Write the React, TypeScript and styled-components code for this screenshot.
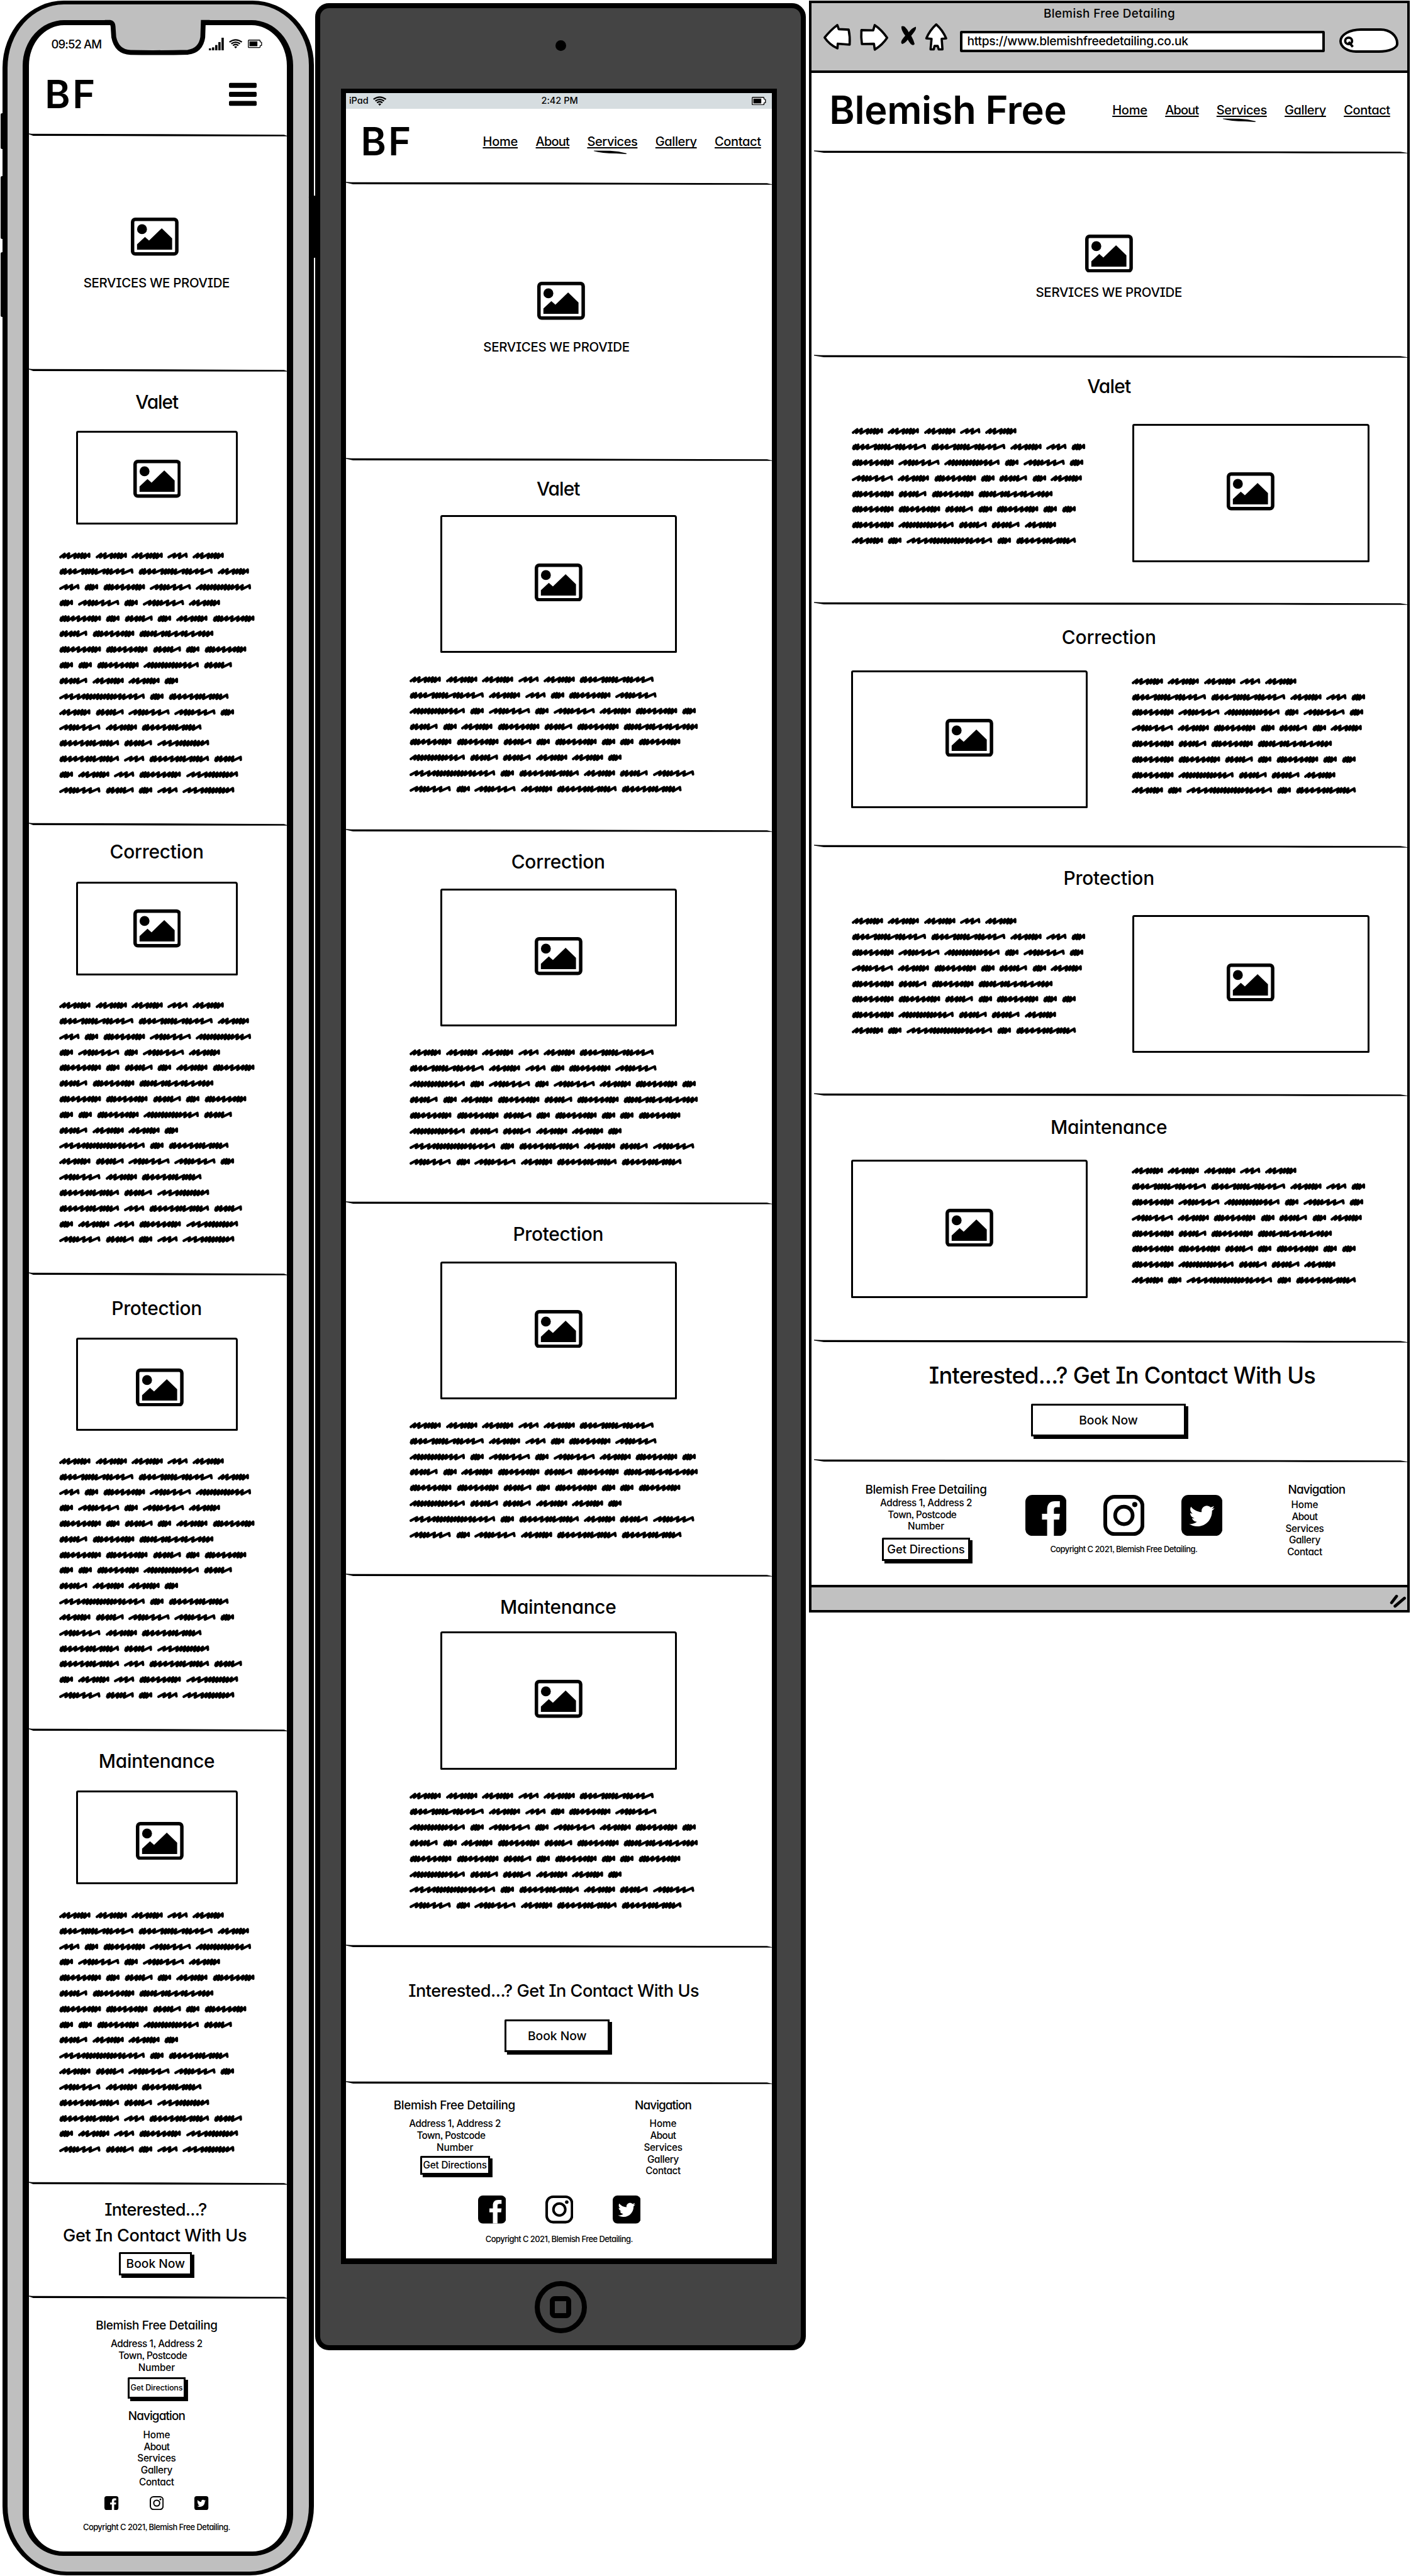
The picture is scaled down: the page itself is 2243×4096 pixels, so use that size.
import React, { useLayoutEffect, useRef, useState } from 'react';
import styled, { createGlobalStyle, css } from 'styled-components';
import { FaTwitter } from 'react-icons/fa';

const SCALE = 0.7859;
const u = (n: number) => `${(n * SCALE).toFixed(3)}px`;
/* Border widths land on whole pixels. */
const b = (n: number) => `${Math.round(n * SCALE)}px`;
const INK = '#000';
const CHROME = '#c1c1c1';

const GlobalStyle = createGlobalStyle`
  * { box-sizing: border-box; }
  html, body { margin: 0; padding: 0; background: #fff; }
  body {
    font-family: Inter, "Open Sans", sans-serif;
    font-weight: 500;
    font-feature-settings: "cv11", "cv08", "ss03";
    color: ${INK};
    overflow: hidden;
  }
  svg { display: block; flex: none; }
`;

/* ---------- text ---------- */

interface LabelProps {
  size: number;
  width: number;
  line?: number;
  top?: number;
  shift?: number;
  underline?: boolean;
  weight?: number;
  children: string;
}

const LabelBox = styled.div<{ $size: number; $line: number; $top: number; $shift: number; $underline?: boolean; $weight?: number }>`
  flex: none;
  white-space: nowrap;
  font-size: ${(p) => u(p.$size)};
  font-weight: ${(p) => p.$weight ?? 500};
  line-height: ${(p) => u(p.$line)};
  height: ${(p) => u(p.$line)};
  margin-top: ${(p) => u(p.$top)};
  ${(p) => p.$shift > 0 && css`margin-left: ${u(p.$shift * 2)};`}
  ${(p) => p.$shift < 0 && css`margin-right: ${u(-p.$shift * 2)};`}
  ${(p) =>
    p.$underline &&
    css`
      text-decoration: underline;
      text-decoration-thickness: ${u(2.8)};
      text-underline-offset: ${u(2.2)};
      text-decoration-skip-ink: none;
    `}
`;

/* Tracks the text so that it fills a given measure. */
function Label({ size, width, line = 24, top = 0, shift = 0, underline, weight, children }: LabelProps) {
  const ref = useRef<HTMLSpanElement>(null);
  const [tracking, setTracking] = useState(0);
  useLayoutEffect(() => {
    if (!ref.current) return;
    const natural = ref.current.getBoundingClientRect().width;
    setTracking((width * SCALE - natural) / (children.length - 0.5));
  }, [children, width]);
  return (
    <LabelBox $size={size} $line={line} $top={top} $shift={shift} $underline={underline} $weight={weight}>
      <span ref={ref} style={{ letterSpacing: tracking }}>{children}</span>
    </LabelBox>
  );
}

/* ---------- sketched glyph words ---------- */

const WORDS: Record<string, { w: number; peaks: number[] }> = {
  A: { w: 63.5, peaks: [11, 20, 33, 40, 47, 53, 61] },
  N: { w: 41.5, peaks: [15, 26, 38] },
  U: { w: 28.3, peaks: [8, 13, 18, 26] },
  P: { w: 150.6, peaks: [8, 13, 23, 33, 49, 56, 62, 69, 76, 92, 99, 106, 119, 130, 147] },
  W: { w: 84.8, peaks: [8, 13, 19, 29, 40, 52, 62, 69, 75, 82] },
  X: { w: 83.7, peaks: [15, 24, 31, 38, 51, 64, 80] },
  Y: { w: 112.3, peaks: [12, 19, 26, 33, 40, 47, 54, 61, 68, 75, 85, 95, 109] },
  V: { w: 57.1, peaks: [8, 15, 25, 32, 39, 54] },
  B: { w: 121.6, peaks: [8, 13, 23, 34, 47, 58, 65, 72, 86, 92, 99, 106, 118] },
  Z: { w: 173.6, peaks: [15, 26, 40, 51, 58, 65, 72, 79, 86, 93, 100, 107, 114, 124, 132, 145, 156, 170] },
  Q: { w: 150.6, peaks: [8, 13, 19, 27, 34, 49, 56, 62, 76, 89, 96, 110, 124, 132, 140, 148] },
  C: { w: 105.2, peaks: [15, 27, 41, 49, 56, 63, 70, 77, 84, 92, 102] },
};

function wordPath(code: string) {
  const { w, peaks } = WORDS[code];
  const dense = peaks[0] < 10;
  let d = dense ? 'M3 10L4.5 5.5L4 11.5' : 'M2.6 10';
  peaks.forEach((p, i) => {
    const last = i === peaks.length - 1;
    d += `L${Math.min(p, w - 2.8)} ${i % 3 === 1 ? 2.9 : 3.5}`;
    d += last ? `L${w - 2.7} 9.2` : `L${p - 2} ${i % 3 === 0 ? 10.6 : 11.6}`;
  });
  return d;
}

function Word({ code }: { code: string }) {
  const { w } = WORDS[code];
  return (
    <svg width={w * SCALE} height={14 * SCALE} viewBox={`0 0 ${w} 14`} overflow="visible">
      <path d={wordPath(code)} fill="none" stroke={INK} strokeWidth="5.2" strokeLinecap="round" strokeLinejoin="round" />
    </svg>
  );
}

const Copy = styled.div<{ $width: number; $top: number; $left?: number }>`
  display: flex;
  flex-wrap: wrap;
  align-content: flex-start;
  align-self: flex-start;
  flex: none;
  column-gap: ${u(9.5)};
  row-gap: ${u(17.58)};
  width: ${(p) => u(p.$width)};
  margin-top: ${(p) => u(p.$top)};
  margin-left: ${(p) => u(p.$left ?? 0)};
`;

const LEAD = 'AAANAPPANUWXYUXUXAWUVUAWVWQWWVUWUUWYVVAAUZUB';
const COPY_PHONE = LEAD + 'AVXXUXABBVCBNBVUANWCXVUNC';
const COPY_TABLET = LEAD + 'AVXXUXABB';

function ScribbleText({ text, width, top, left }: { text: string; width: number; top: number; left?: number }) {
  return (
    <Copy $width={width} $top={top} $left={left}>
      {text.split('').map((c, i) => <Word key={i} code={c} />)}
    </Copy>
  );
}

/* ---------- icons ---------- */

const PictureIcon = () => (
  <svg width={96.5 * SCALE} height={77 * SCALE} viewBox="0 0 96.5 77">
    <rect x="3.5" y="3.5" width="89.5" height="70" rx="5.5" fill="#fff" stroke={INK} strokeWidth="7" />
    <circle cx="22.6" cy="23.4" r="10" />
    <path d="M12.5 54L28.6 39L36.8 46.5L62.5 21.5L83.5 42V65H12.5Z" />
  </svg>
);

const WifiIcon = ({ w = 27, h = 20 }: { w?: number; h?: number }) => (
  <svg width={w * SCALE} height={h * SCALE} viewBox="0 0 27 20" fill="none" stroke={INK} strokeWidth="2.8">
    <path d="M.9 6.2Q13.5 -3 26.1 6.2" />
    <path d="M4.7 9.8Q13.5 3.1 22.3 9.8" />
    <path d="M8 13.2Q13.5 8.6 19 13.2" />
    <path d="M10.4 15.8L13.5 19.2L16.6 15.8Q13.5 13.8 10.4 15.8Z" fill={INK} stroke="none" />
  </svg>
);

const BatteryIcon = () => (
  <svg width={29 * SCALE} height={17 * SCALE} viewBox="0 0 29 17">
    <path d="M2.2 1H23.5Q24.8 1 24.8 2.4V4.2L27.8 5.6V11.4L24.8 12.6V14.6Q24.8 16 23.5 16H2.2Q1 16 1 14.6V2.4Q1 1 2.2 1Z" fill="#fff" stroke={INK} strokeWidth="1.7" />
    <rect x="3.3" y="3.6" width="16" height="9.8" />
  </svg>
);

const SignalIcon = () => (
  <svg width={30.5 * SCALE} height={26 * SCALE} viewBox="0 0 30.5 26">
    <rect x="0" y="21.5" width="4.6" height="4.5" />
    <rect x="6.4" y="19.5" width="4.6" height="6.5" />
    <rect x="12.8" y="14.8" width="4.6" height="11.2" />
    <rect x="19.2" y="8.8" width="4.6" height="17.2" />
    <rect x="25.6" y="0" width="4.6" height="26" />
  </svg>
);

const MenuIcon = () => (
  <svg width={56 * SCALE} height={48 * SCALE} viewBox="0 0 56 48">
    <rect y="1" width="56" height="10" rx="2.5" />
    <rect y="19.2" width="56" height="10" rx="2.5" />
    <rect y="37.4" width="56" height="10" rx="2.5" />
  </svg>
);

const FacebookIcon = ({ size }: { size: number }) => (
  <svg width={size * SCALE} height={size * SCALE} viewBox="0 0 100 100">
    <rect width="100" height="100" rx="17" />
    <path d="M53 100V60H40.500V46H53V36C53 22 60 15.500 72 15.500H84V30H77C71 30 69.500 32 69.500 38V46H84L82.500 60H69.500V100Z" fill="#fff" />
  </svg>
);

const InstagramIcon = ({ size }: { size: number }) => (
  <svg width={size * SCALE} height={size * SCALE} viewBox="0 0 100 100">
    <rect x="4.600" y="4.600" width="90.800" height="90.800" rx="23" fill="#fff" stroke={INK} strokeWidth="9.200" />
    <circle cx="50" cy="50" r="21.300" fill="none" stroke={INK} strokeWidth="9" />
    <circle cx="76.500" cy="23.500" r="6.300" />
  </svg>
);

const TwitterIcon = ({ size }: { size: number }) => (
  <svg width={size * SCALE} height={size * SCALE} viewBox="0 0 100 100">
    <rect width="100" height="100" rx="17" />
    <FaTwitter x={19} y={20.500} size={62} color="#fff" />
  </svg>
);

/* ---------- shared parts ---------- */

const RuleSvg = styled.svg<{ $inset?: boolean }>`
  align-self: stretch;
  height: ${u(7)};
  ${(p) => (p.$inset ? css`width: ${u(1200)}; margin-left: ${u(5)};` : css`width: 100%;`)}
`;

const Rule = ({ inset }: { inset?: boolean }) => (
  <RuleSvg $inset={inset} viewBox="0 0 1200 7" preserveAspectRatio="none">
    <path d="M0 0.300L14 1.100L600 1.500L1186 3L1200 5V6.200L1000 5.900L400 5.500L20 5L0 2Z" />
  </RuleSvg>
);

const Section = styled.section<{ $height: number }>`
  flex: none;
  display: flex;
  flex-direction: column;
  height: ${(p) => u(p.$height)};
`;

const Column = styled.div<{ $lean?: number }>`
  display: flex;
  flex-direction: column;
  align-items: center;
  padding-right: ${(p) => u(p.$lean ?? 0)};
`;

const Spaced = styled.div<{ $top: number; $shift?: number }>`
  margin-top: ${(p) => u(p.$top)};
  ${(p) => (p.$shift ?? 0) > 0 && css`margin-left: ${u((p.$shift ?? 0) * 2)};`}
  ${(p) => (p.$shift ?? 0) < 0 && css`margin-right: ${u(-(p.$shift ?? 0) * 2)};`}
`;

const PictureFrame = styled.div<{ $w: number; $h: number; $top: number; $dx: number; $dy: number }>`
  flex: none;
  display: flex;
  align-items: center;
  justify-content: center;
  width: ${(p) => u(p.$w)};
  height: ${(p) => u(p.$h)};
  margin-top: ${(p) => u(p.$top)};
  padding-left: ${(p) => u(Math.max(0, p.$dx * 2))};
  padding-top: ${(p) => u(Math.max(0, p.$dy * 2))};
  padding-bottom: ${(p) => u(Math.max(0, -p.$dy * 2))};
  border: ${b(4)} solid ${INK};
  border-radius: ${u(4)} ${u(5)} ${u(2)} ${u(2)};
`;

function Picture({ w = 479.5, h = 279, top = 0, dx = 0, dy = 0 }: { w?: number; h?: number; top?: number; dx?: number; dy?: number }) {
  return (
    <PictureFrame $w={w} $h={h} $top={top} $dx={dx} $dy={dy}>
      <PictureIcon />
    </PictureFrame>
  );
}

const Button = styled.button<{ $w: number; $h: number; $top: number }>`
  flex: none;
  display: flex;
  align-items: center;
  justify-content: center;
  width: ${(p) => u(p.$w)};
  height: ${(p) => u(p.$h)};
  margin: ${(p) => u(p.$top)} 0 0;
  padding: 0;
  color: ${INK};
  font: inherit;
  font-feature-settings: inherit;
  background: #fff;
  border: ${b(4)} solid ${INK};
  border-radius: ${u(2)} 0 0 0;
  box-shadow: ${u(5)} ${u(5)} 0 ${INK};
`;

const Nav = styled.nav<{ $gap: number }>`
  display: flex;
  gap: ${(p) => u(p.$gap)};
`;

const NavItem = styled.a`
  position: relative;
  color: inherit;
`;

const SwooshSvg = styled.svg`
  position: absolute;
  left: ${u(13)};
  top: ${u(30)};
`;

const NAV: [string, number][] = [['Home', 71], ['About', 68.5], ['Services', 102], ['Gallery', 84], ['Contact', 94]];

function TopNav({ gap }: { gap: number }) {
  return (
    <Nav $gap={gap}>
      {NAV.map(([text, width]) => (
        <NavItem key={text}>
          <Label size={25.5} width={width} line={26} underline>{text}</Label>
          {text === 'Services' && (
            <SwooshSvg width={66 * SCALE} height={8 * SCALE} viewBox="0 0 66 8">
              <path d="M0 .5L33 .8Q50 1.500 66 6V7.500L45 6.500Q15 6 0 1.500Z" />
            </SwooshSvg>
          )}
        </NavItem>
      ))}
    </Nav>
  );
}

const HeaderRow = styled.header<{ $height: number; $left: number; $right: number; $bottom: number }>`
  flex: none;
  display: flex;
  align-items: center;
  justify-content: space-between;
  height: ${(p) => u(p.$height)};
  padding: 0 ${(p) => u(p.$right)} ${(p) => u(p.$bottom)} ${(p) => u(p.$left)};
`;

const SocialRow = styled.div<{ $gap: number; $top: number }>`
  display: flex;
  gap: ${(p) => u(p.$gap)};
  margin-top: ${(p) => u(p.$top)};
`;

function Social({ size, gap, top }: { size: number; gap: number; top: number }) {
  return (
    <SocialRow $gap={gap} $top={top}>
      <FacebookIcon size={size} />
      <InstagramIcon size={size} />
      <TwitterIcon size={size} />
    </SocialRow>
  );
}

const Address = ({ top }: { top: number }) => (
  <>
    <Label size={19.5} width={186} line={24} top={top}>Address 1, Address 2</Label>
    <Label size={19.5} width={139} line={24} shift={-8}>Town, Postcode</Label>
    <Label size={19.5} width={74} line={24}>Number</Label>
  </>
);

const FOOT_NAV: [string, number][] = [['Home', 54.5], ['About', 52.5], ['Services', 78], ['Gallery', 64], ['Contact', 71]];

const FooterNav = ({ top }: { top: number }) => (
  <Spaced $top={top}>
    <Column>
      {FOOT_NAV.map(([text, width]) => <Label key={text} size={19.5} width={width} line={24}>{text}</Label>)}
    </Column>
  </Spaced>
);

const Copyright = ({ top }: { top: number }) => (
  <Label size={16.5} width={298} line={20} top={top}>Copyright C 2021, Blemish Free Detailing.</Label>
);

/* ---------- phone ---------- */

const PhoneShell = styled.div`
  flex: none;
  position: relative;
  width: ${u(630)};
  height: ${u(5209)};
  margin: ${u(1)} 0 0 ${u(5)};
  padding: ${u(31.5)} 0 0 ${u(30.8)};
  background: #bfbfbf;
  border: solid ${INK};
  border-width: ${b(7.5)} ${b(10.5)} ${b(8)};
  border-radius: ${u(124)} ${u(124)} ${u(130)} ${u(130)} / ${u(136)} ${u(130)} ${u(140)} ${u(140)};
`;

const PhoneScreen = styled.div`
  display: flex;
  flex-direction: column;
  width: ${u(547.5)};
  height: ${u(5131)};
  background: #fff;
  border: solid ${INK};
  border-width: ${b(10)} ${b(12.5)} ${b(8.5)} ${b(13)};
  border-radius: ${u(84)} ${u(84)} ${u(82)} ${u(82)} / ${u(92)} ${u(92)} ${u(84)} ${u(84)};
`;

const SideKey = styled.i<{ $top: number; $height: number; $right?: boolean }>`
  position: absolute;
  top: ${(p) => u(p.$top - 8.5)};
  height: ${(p) => u(p.$height)};
  ${(p) => (p.$right ? css`right: ${u(-14)}; width: ${u(14)};` : css`left: ${u(-14.5)}; width: ${u(8)};`)}
  background: ${INK};
  border-radius: ${u(3)};
`;

const NotchSvg = styled.svg`
  position: absolute;
  left: ${u(190.5)};
  top: ${u(29.8)};
`;

const PhoneStatus = styled.div`
  flex: none;
  display: flex;
  align-items: center;
  justify-content: space-between;
  height: ${u(76)};
  padding: ${u(2)} ${u(50)} 0 ${u(45)};
`;

const IconRow = styled.div`
  display: flex;
  align-items: center;
  gap: ${u(11)};
`;

interface Service {
  name: string;
  nameWidth: number;
  height: number;
  head: number;
  box: number;
  copy: number;
  dx?: number;
  dy?: number;
}

const PHONE_SERVICES: Service[] = [
  { name: 'Valet', nameWidth: 87, height: 918.5, head: 41, box: 38, copy: 56.5, dx: 0, dy: 2 },
  { name: 'Correction', nameWidth: 190, height: 909.5, head: 32.5, box: 40, copy: 54 },
  { name: 'Protection', nameWidth: 183, height: 923, head: 46, box: 39, copy: 54, dx: 6, dy: 6 },
  { name: 'Maintenance', nameWidth: 235, height: 917, head: 40, box: 39, copy: 56, dx: 6, dy: 7 },
];

const Phone = () => (
  <PhoneShell>
    <SideKey $top={229} $height={73} />
    <SideKey $top={356} $height={128} />
    <SideKey $top={510} $height={131} />
    <SideKey $top={395} $height={127} $right />
    <PhoneScreen>
      <PhoneStatus>
        <Label size={23.5} width={102} line={26}>09:52 AM</Label>
        <IconRow>
          <SignalIcon />
          <WifiIcon />
          <BatteryIcon />
        </IconRow>
      </PhoneStatus>
      <HeaderRow $height={144} $left={32} $right={62} $bottom={14}>
        <Label size={78} width={104} line={80} weight={600}>BF</Label>
        <MenuIcon />
      </HeaderRow>
      <Section $height={476}>
        <Rule />
        <Column>
          <Spaced $top={163} $shift={-6.5}><PictureIcon /></Spaced>
          <Label size={26} width={296} line={30} top={39.5} shift={-3}>SERVICES WE PROVIDE</Label>
        </Column>
      </Section>
      {PHONE_SERVICES.map((s) => (
        <Section key={s.name} $height={s.height}>
          <Rule />
          <Column $lean={4.5}>
            <Label size={38} width={s.nameWidth} line={40} top={s.head} shift={-0.5}>{s.name}</Label>
            <Picture w={328} h={189} top={s.box} dx={s.dx} dy={s.dy} />
            <ScribbleText text={COPY_PHONE} width={400} top={s.copy} left={61.4} />
          </Column>
        </Section>
      ))}
      <Section $height={230}>
        <Rule />
        <Column $lean={10}>
          <Label size={34.5} width={207} line={40} top={29.5}>Interested...?</Label>
          <Label size={34.5} width={372} line={40} top={12} shift={-1.5}>Get In Contact With Us</Label>
          <Button $w={147.5} $h={46.5} $top={14.2}>
            <Label size={24.5} width={119} line={28}>Book Now</Label>
          </Button>
        </Column>
      </Section>
      <Section $height={515}>
        <Rule />
        <Column $lean={6}>
          <Label size={24} width={246} line={26} top={41.3}>Blemish Free Detailing</Label>
          <Address top={13} />
          <Button $w={117} $h={43} $top={6.6}>
            <Label size={16} width={105.5} line={20}>Get Directions</Label>
          </Button>
          <Label size={24} width={115.5} line={26} top={22.3}>Navigation</Label>
          <FooterNav top={13.7} />
          <Social size={28.3} gap={62.7} top={15} />
          <Copyright top={25} />
        </Column>
      </Section>
    </PhoneScreen>
    <NotchSvg width={226 * SCALE} height={78 * SCALE} viewBox="206 38 226 78">
      <path d="M221 38L229 52L231 75Q236 106 268 106H380Q408 104 410 75L411 48V38Z" fill="#bfbfbf" />
      <path d="M212 45H222Q228 46 228.500 53L230 75Q236 105 264 106Q320 107 380 105.500Q406 102 410 75L411 45H424" fill="none" stroke={INK} strokeWidth="9.800" />
    </NotchSvg>
  </PhoneShell>
);

/* ---------- tablet ---------- */

const TabletShell = styled.div`
  flex: none;
  display: flex;
  flex-direction: column;
  align-items: center;
  width: ${u(992)};
  height: ${u(4748.5)};
  margin: ${u(6)} 0 0 ${u(3)};
  padding-right: ${u(6)};
  background: #444;
  border: ${b(10)} solid ${INK};
  border-radius: ${u(28)};
`;

const CameraBar = styled.div`
  flex: none;
  display: flex;
  align-items: center;
  height: ${u(163)};
  padding: 0 0 ${u(11)} ${u(6)};
`;

const Camera = styled.i`
  width: ${u(22)};
  height: ${u(22)};
  border-radius: 50%;
  background: ${INK};
`;

const TabletScreen = styled.div`
  flex: none;
  display: flex;
  flex-direction: column;
  width: ${u(882)};
  height: ${u(4402)};
  background: #fff;
  border: solid ${INK};
  border-width: ${b(9)} ${b(10)} ${b(12)};
`;

const TabletStatus = styled.div`
  flex: none;
  display: grid;
  grid-template-columns: 1fr auto 1fr;
  align-items: center;
  height: ${u(32)};
  padding: 0 ${u(12)} 0 ${u(6)};
  background: #d6dde0;
`;

const StatusSide = styled.div<{ $end?: boolean }>`
  display: flex;
  align-items: center;
  gap: ${u(10)};
  justify-content: ${(p) => (p.$end ? 'flex-end' : 'flex-start')};
`;

const HomeKey = styled.div`
  display: flex;
  align-items: center;
  justify-content: center;
  width: ${u(105.6)};
  height: ${u(105.6)};
  margin: ${u(34)} 0 0 ${u(6)};
  border: ${b(10)} solid ${INK};
  border-radius: 50%;
`;

const HomeGlyph = styled.i`
  width: ${u(44)};
  height: ${u(45)};
  border: ${b(10)} solid ${INK};
  border-radius: ${u(10)};
`;

const FooterColumns = styled.div`
  display: flex;
  align-items: flex-start;
`;

const FooterCell = styled.div<{ $width: number; $left?: number; $top?: number }>`
  flex: none;
  display: flex;
  flex-direction: column;
  align-items: center;
  width: ${(p) => u(p.$width)};
  margin-left: ${(p) => u(p.$left ?? 0)};
  padding-top: ${(p) => u(p.$top ?? 0)};
`;

const TABLET_SERVICES: Service[] = [
  { name: 'Valet', nameWidth: 88, height: 750.5, head: 36, box: 32.5, copy: 47 },
  { name: 'Correction', nameWidth: 190, height: 753, head: 40.5, box: 33.5, copy: 46 },
  { name: 'Protection', nameWidth: 183, height: 754, head: 41, box: 34, copy: 46 },
  { name: 'Maintenance', nameWidth: 235, height: 750.5, head: 41.5, box: 28.5, copy: 47 },
];

const Tablet = () => (
  <TabletShell>
    <CameraBar><Camera /></CameraBar>
    <TabletScreen>
      <TabletStatus>
        <StatusSide>
          <Label size={18.5} width={39} line={24}>iPad</Label>
          <WifiIcon />
        </StatusSide>
        <Label size={18.5} width={74} line={24} shift={4}>2:42 PM</Label>
        <StatusSide $end><BatteryIcon /></StatusSide>
      </TabletStatus>
      <HeaderRow $height={148} $left={29.5} $right={22.5} $bottom={15}>
        <Label size={78} width={104} line={80} weight={600}>BF</Label>
        <TopNav gap={36.2} />
      </HeaderRow>
      <Section $height={558.5}>
        <Rule />
        <Column>
          <Spaced $top={195} $shift={4.5}><PictureIcon /></Spaced>
          <Label size={26} width={296} line={30} top={40} shift={-5.5}>SERVICES WE PROVIDE</Label>
        </Column>
      </Section>
      {TABLET_SERVICES.map((s) => (
        <Section key={s.name} $height={s.height}>
          <Rule />
          <Column $lean={2}>
            <Label size={38} width={s.nameWidth} line={40} top={s.head} shift={-1}>{s.name}</Label>
            <Picture top={s.box} dy={-3} />
            <ScribbleText text={COPY_TABLET} width={590} top={s.copy} left={128.8} />
          </Column>
        </Section>
      ))}
      <Section $height={276.5}>
        <Rule />
        <Column $lean={8}>
          <Label size={34.5} width={588} line={40} top={66.5} shift={-7}>Interested...? Get In Contact With Us</Label>
          <Button $w={212} $h={66.5} $top={38}>
            <Label size={24.5} width={119} line={28}>Book Now</Label>
          </Button>
        </Column>
      </Section>
      <Section $height={350}>
        <Rule />
        <FooterColumns>
          <FooterCell $width={440} $top={29.5}>
            <Label size={24} width={246} line={26} shift={-1}>Blemish Free Detailing</Label>
            <Address top={12} />
            <Button $w={141} $h={38.5} $top={4.5}>
              <Label size={19.5} width={129} line={24}>Get Directions</Label>
            </Button>
          </FooterCell>
          <FooterCell $width={402} $top={29.5}>
            <Label size={24} width={115} line={26}>Navigation</Label>
            <FooterNav top={12} />
          </FooterCell>
        </FooterColumns>
        <Column>
          <Social size={56.5} gap={79.7} top={37} />
          <Copyright top={21.5} />
        </Column>
      </Section>
    </TabletScreen>
    <HomeKey><HomeGlyph /></HomeKey>
  </TabletShell>
);

/* ---------- desktop browser ---------- */

const Window = styled.div`
  flex: none;
  display: flex;
  flex-direction: column;
  width: ${u(1216)};
  height: ${u(3260.5)};
  margin: ${u(1.5)} 0 0 ${u(6)};
  background: #fff;
  border: ${b(5)} solid ${INK};
`;

const TitleBar = styled.div`
  flex: none;
  display: flex;
  flex-direction: column;
  align-items: center;
  height: ${u(140.5)};
  background: ${CHROME};
  border-bottom: ${b(4.8)} solid ${INK};
`;

const Toolbar = styled.div`
  align-self: stretch;
  display: flex;
  align-items: flex-start;
  padding: ${u(4)} 0 0 ${u(24.6)};
`;

const ToolSlot = styled.div<{ $top: number; $left: number }>`
  margin: ${(p) => u(p.$top)} 0 0 ${(p) => u(p.$left)};
`;

const AddressField = styled.div`
  display: flex;
  align-items: center;
  width: ${u(737)};
  height: ${u(43)};
  margin: ${u(15.5)} 0 0 ${u(26)};
  padding: 0 0 ${u(1)} ${u(9)};
  background: #fff;
  border: ${b(4.8)} solid ${INK};
  border-radius: ${u(3)};
`;

const SearchField = styled.div`
  width: ${u(119)};
  height: ${u(49)};
  margin: ${u(11)} 0 0 ${u(30)};
  padding: ${u(11)} 0 0 ${u(3)};
  background: #fff;
  border: ${b(5)} solid ${INK};
  border-radius: ${u(44)} ${u(36)} ${u(40)} ${u(34)} / ${u(26)} ${u(30)} ${u(18)} ${u(24)};
`;

const ToolGlyph = ({ w, h, d }: { w: number; h: number; d: string }) => (
  <svg width={w * SCALE} height={h * SCALE} viewBox={`0 0 ${w} ${h}`} overflow="visible">
    <path d={d} fill="#fff" stroke={INK} strokeWidth="4.600" strokeLinejoin="round" />
  </svg>
);

const ServiceRow = styled.div<{ $top: number; $left: number; $gap: number }>`
  display: flex;
  align-items: flex-start;
  align-self: stretch;
  gap: ${(p) => u(p.$gap)};
  margin-top: ${(p) => u(p.$top)};
  padding-left: ${(p) => u(p.$left)};
`;

const StatusBar = styled.div`
  flex: none;
  display: flex;
  justify-content: flex-end;
  margin-top: auto;
  height: ${u(51)};
  padding: ${u(14)} ${u(2)} 0 0;
  background: ${CHROME};
  border-top: ${b(5.5)} solid ${INK};
`;

const DESKTOP_SERVICES: Service[] = [
  { name: 'Valet', nameWidth: 88.5, height: 500.5, head: 37.5, box: 56, copy: 7.7 },
  { name: 'Correction', nameWidth: 191, height: 490.5, head: 45, box: 46, copy: 15.4 },
  { name: 'Protection', nameWidth: 184, height: 503, head: 41.5, box: 54, copy: 6 },
  { name: 'Maintenance', nameWidth: 236, height: 498.5, head: 42, box: 46.5, copy: 15 },
];

const Desktop = () => (
  <Window>
    <TitleBar>
      <Label size={24} width={266} line={28} top={8}>Blemish Free Detailing</Label>
      <Toolbar>
        <ToolSlot $top={1.5} $left={0}>
          <ToolGlyph w={55} h={51} d="M2.400 27.600Q14 13 28 2.400L31 10.700L51 11.600Q54 26 53 42L29 40L28.300 49.400Q12 42 2.400 27.600Z" />
        </ToolSlot>
        <ToolSlot $top={1.5} $left={19}>
          <ToolGlyph w={56.5} h={54} d="M55 28Q44 12 30 2.400L26.800 13L3 12.600Q2 26 4 40.700L28.300 40.200L30 52Q46 42 55 28Z" />
        </ToolSlot>
        <ToolSlot $top={5} $left={26}>
          <svg width={32 * SCALE} height={40 * SCALE} viewBox="0 0 32 40">
            <path d="M1 2Q3 -1 8 2Q13 7 16 13Q22 5 30 2Q32 5 28 11Q23 18 21 20Q26 29 28 37Q25 41 20 37Q16 32 14 28Q9 35 3 37Q-1 35 2 29Q6 23 9 20Q1 10 1 2Z" />
          </svg>
        </ToolSlot>
        <ToolSlot $top={0} $left={18.3}>
          <ToolGlyph w={44} h={55} d="M22 2.400Q35 14 42 30.500L33 31.500L34.600 52.800H27L25 46H18.500L17 52.800H10.500L12.500 31.500L2 30.500Q9 14 22 2.400Z" />
        </ToolSlot>
        <AddressField>
          <Label size={24.5} width={447} line={28}>https://www.blemishfreedetailing.co.uk</Label>
        </AddressField>
        <SearchField>
          <svg width={21 * SCALE} height={23 * SCALE} viewBox="0 0 21 23" fill="none" stroke={INK} strokeWidth="4.800">
            <ellipse cx="10" cy="9" rx="7" ry="6.500" />
            <path d="M10 11L18.500 21" />
          </svg>
        </SearchField>
      </Toolbar>
    </TitleBar>
    <HeaderRow $height={157} $left={36.5} $right={35} $bottom={5.5}>
      <Label size={78} width={480} line={80} weight={600}>Blemish Free</Label>
      <TopNav gap={36} />
    </HeaderRow>
    <Section $height={413.5}>
      <Rule inset />
      <Column $lean={2}>
        <Spaced $top={163.5}><PictureIcon /></Spaced>
        <Label size={26} width={296} line={30} top={25.5}>SERVICES WE PROVIDE</Label>
      </Column>
    </Section>
    {DESKTOP_SERVICES.map((s, i) => (
      <Section key={s.name} $height={s.height}>
        <Rule inset />
        <Column>
          <Label size={38} width={s.nameWidth} line={40} top={s.head} shift={-1}>{s.name}</Label>
          {i % 2 === 0 ? (
            <ServiceRow $top={s.box} $left={82} $gap={88}>
              <ScribbleText text={LEAD} width={479} top={s.copy} />
              <Picture dy={-3} />
            </ServiceRow>
          ) : (
            <ServiceRow $top={s.box} $left={80} $gap={88.5}>
              <Picture dy={-3} />
              <ScribbleText text={LEAD} width={479} top={s.copy} />
            </ServiceRow>
          )}
        </Column>
      </Section>
    ))}
    <Section $height={242}>
      <Rule inset />
      <Column $lean={4}>
        <Label size={46} width={782} line={50} top={41} shift={28}>Interested...? Get In Contact With Us</Label>
        <Button $w={314} $h={66} $top={32}>
          <Label size={24.5} width={119} line={28}>Book Now</Label>
        </Button>
      </Column>
    </Section>
    <Section $height={252}>
      <Rule inset />
      <FooterColumns>
        <FooterCell $width={260} $left={102} $top={42.8}>
          <Label size={24} width={246} line={26}>Blemish Free Detailing</Label>
          <Address top={1.5} />
          <Button $w={179} $h={47} $top={9.7}>
            <Label size={23.5} width={157} line={26}>Get Directions</Label>
          </Button>
        </FooterCell>
        <FooterCell $width={400} $left={70} $top={65.7}>
          <Social size={83} gap={75} top={0} />
          <Copyright top={17.5} />
        </FooterCell>
        <FooterCell $width={180} $left={76} $top={42.8}>
          <Label size={24} width={116} line={26} shift={24}>Navigation</Label>
          <FooterNav top={5.5} />
        </FooterCell>
      </FooterColumns>
    </Section>
    <StatusBar>
      <svg width={34 * SCALE} height={28 * SCALE} viewBox="0 0 34 28" fill="none" stroke={INK} strokeWidth="6" strokeLinecap="round">
        <path d="M4 17L14 4M11 24L30 8" />
      </svg>
    </StatusBar>
  </Window>
);

const Board = styled.main`
  display: flex;
  align-items: flex-start;
  width: 2243px;
  height: 4096px;
  overflow: hidden;
  background: #fff;
`;

export default function App() {
  return (
    <>
      <GlobalStyle />
      <Board>
        <Phone />
        <Tablet />
        <Desktop />
      </Board>
    </>
  );
}
